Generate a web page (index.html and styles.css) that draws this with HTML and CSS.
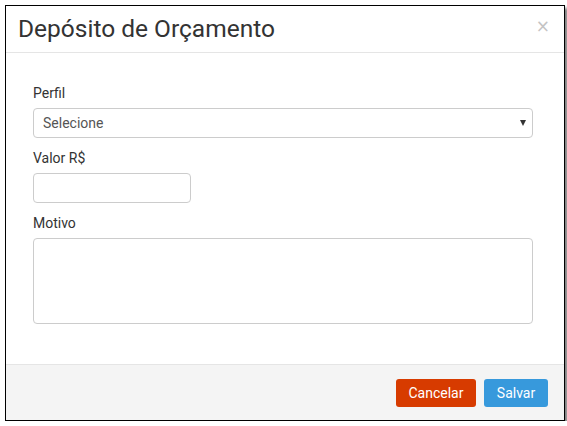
FILE: index.html
```html
<!DOCTYPE html>
<html lang="pt">
<head>
<meta charset="utf-8">
<title>Depósito de Orçamento</title>
<link rel="stylesheet" href="styles.css">
</head>
<body>
<div class="modal">
  <div class="modal-header">
    <h4 class="modal-title">Depósito de Orçamento</h4>
    <button class="close" type="button">×</button>
  </div>
  <div class="modal-body">
    <div class="form-group">
      <label class="label">Perfil</label>
      <div class="select-wrap">
        <select class="control select"><option>Selecione</option></select>
      </div>
    </div>
    <div class="form-group">
      <label class="label">Valor R$</label>
      <input class="control input-small" type="text">
    </div>
    <div class="form-group">
      <label class="label">Motivo</label>
      <textarea class="control textarea"></textarea>
    </div>
  </div>
  <div class="modal-footer">
    <button class="btn btn-danger" type="button">Cancelar</button>
    <button class="btn btn-primary" type="button">Salvar</button>
  </div>
</div>
</body>
</html>
```
FILE: styles.css
```css
* { box-sizing: border-box; }
html, body { margin: 0; padding: 0; background: #fff; }
body { font-family: Roboto, "Liberation Sans", sans-serif; color: #333; }

.modal {
  margin: 5px 0 0 5px;
  width: 560px;
  height: 416px;
  border: 1px solid #000;
  background: #fff;
  box-shadow: 3px 3px 3px rgba(0,0,0,0.5);
  display: flex;
  flex-direction: column;
}

.modal-header {
  height: 47px;
  border-bottom: 1px solid #e5e5e5;
  display: flex;
  align-items: center;
  justify-content: space-between;
  padding: 0 14px 0 12px;
}
.modal-title {
  margin: 0;
  font-size: 24.5px;
  font-weight: 400;
  color: #333;
  line-height: 1;
}
.close {
  border: 0;
  background: none;
  padding: 0;
  font-family: "DejaVu Sans", sans-serif;
  font-size: 17px;
  color: #c4c4c4;
  line-height: 1;
  margin-top: -6px;
  cursor: pointer;
}

.modal-body {
  flex: 1;
  padding: 30px 31px 0 27px;
}
.form-group { margin-bottom: 10px; }
.label {
  display: block;
  font-size: 14px;
  line-height: 20px;
  color: #333;
  margin-bottom: 5px;
}
.control {
  display: block;
  border: 1px solid #ccc;
  border-radius: 4px;
  background: #fff;
  font-family: Roboto, "Liberation Sans", sans-serif;
  font-size: 14px;
  color: #555;
  outline: none;
}
.select-wrap { position: relative; }
.select {
  width: 100%;
  height: 30px;
  padding: 0 9px;
  -webkit-appearance: none;
  appearance: none;
}
.select-wrap::after {
  content: "";
  position: absolute;
  right: 7px;
  top: 12px;
  border-left: 3px solid transparent;
  border-right: 3px solid transparent;
  border-top: 6px solid #333;
}
.input-small {
  width: 158px;
  height: 30px;
  padding: 0 9px;
}
.textarea {
  width: 100%;
  height: 86px;
  resize: none;
}

.modal-footer {
  height: 56px;
  border-top: 1px solid #e5e5e5;
  background: #f4f4f4;
  display: flex;
  justify-content: flex-end;
  align-items: flex-start;
  gap: 8px;
  padding: 14px 16px 0 0;
}
.btn {
  height: 28px;
  border: 0;
  border-radius: 3px;
  color: #fff;
  font-family: Roboto, "Liberation Sans", sans-serif;
  font-size: 14px;
  padding: 0 12px;
  cursor: pointer;
}
.btn-danger { background: #d73b00; width: 80px; }
.btn-primary { background: #3799dc; width: 64px; }
```
